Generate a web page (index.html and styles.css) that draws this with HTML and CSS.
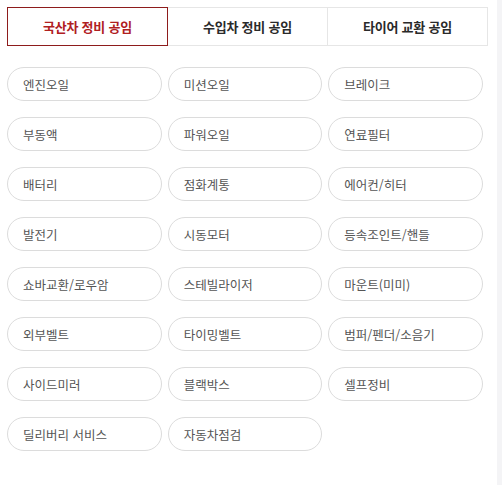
FILE: index.html
```html
<!DOCTYPE html>
<html lang="ko">
<head>
<meta charset="utf-8">
<link rel="stylesheet" href="styles.css">
</head>
<body>
<div class="page">
  <div class="tabs">
    <div class="tab active">국산차 정비 공임</div>
    <div class="tab">수입차 정비 공임</div>
    <div class="tab">타이어 교환 공임</div>
  </div>
  <div class="grid">
    <div class="item">엔진오일</div>
    <div class="item">미션오일</div>
    <div class="item">브레이크</div>
    <div class="item">부동액</div>
    <div class="item">파워오일</div>
    <div class="item">연료필터</div>
    <div class="item">배터리</div>
    <div class="item">점화계통</div>
    <div class="item">에어컨/히터</div>
    <div class="item">발전기</div>
    <div class="item">시동모터</div>
    <div class="item">등속조인트/핸들</div>
    <div class="item">쇼바교환/로우암</div>
    <div class="item">스테빌라이저</div>
    <div class="item">마운트(미미)</div>
    <div class="item">외부벨트</div>
    <div class="item">타이밍벨트</div>
    <div class="item">범퍼/펜더/소음기</div>
    <div class="item">사이드미러</div>
    <div class="item">블랙박스</div>
    <div class="item">셀프정비</div>
    <div class="item">딜리버리 서비스</div>
    <div class="item">자동차점검</div>
  </div>
</div>
<div class="edge"></div>
</body>
</html>
```
FILE: styles.css
```css
html, body {
  margin: 0;
  padding: 0;
  background: #fff;
}
body {
  font-family: "Noto Sans CJK KR", "Noto Sans", sans-serif;
  width: 502px;
  height: 485px;
  position: relative;
  overflow: hidden;
}
.page {
  padding: 7px 0 0 7px;
  width: 481px;
}
.tabs {
  display: flex;
}
.tab {
  flex: 1;
  height: 37px;
  border: 1px solid #e6e6e6;
  border-left: none;
  display: flex;
  align-items: center;
  justify-content: center;
  font-size: 13px;
  font-weight: 700;
  color: #2a2a2a;
  letter-spacing: -0.2px;
}
.tab:first-child {
  border-left: 1px solid #e6e6e6;
}
.tab.active {
  border: 1px solid #8e1c1c;
  color: #b0201f;
}
.grid {
  margin-top: 21px;
  width: 476px;
  display: grid;
  grid-template-columns: repeat(3, 1fr);
  column-gap: 6px;
  row-gap: 16px;
}
.item {
  height: 32px;
  border: 1px solid #dcdcdc;
  border-radius: 17px;
  display: flex;
  align-items: center;
  padding-left: 15px;
  font-size: 12.5px;
  color: #555;
}
.edge {
  position: absolute;
  top: 0;
  right: 0;
  width: 5px;
  height: 485px;
  background: #f4f4f6;
}
```
